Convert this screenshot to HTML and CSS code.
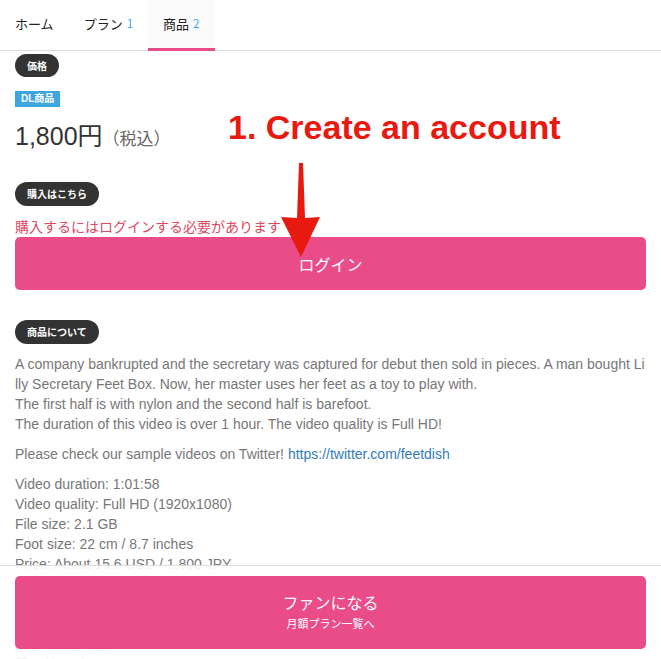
FILE: index.html
```
<!DOCTYPE html>
<html lang="ja">

<head>
    <meta charset="UTF-8">
    <meta name="viewport" content="width=device-width, initial-scale=1.0">
    <title>商品</title>

    <link rel="stylesheet" href="styles.css">
</head>

<body>
    <!-- Tabs -->
    <nav class="tabs">
        <a class="tab" href="#">ホーム</a>
        <a class="tab" href="#">プラン <span class="count">1</span></a>
        <a class="tab active" href="#">商品 <span class="count">2</span></a>
    </nav>

    <main class="content">
        <span class="badge badge-first">価格</span>

        <div class="dl-label">DL商品</div>
        <div class="price">1,800円<span class="tax">（税込）</span></div>

        <span class="badge">購入はこちら</span>
        <p class="notice">購入するにはログインする必要があります</p>
        <button class="pink-btn login-btn">ログイン</button>

        <span class="badge">商品について</span>
        <div class="desc">
            <p>A company bankrupted and the secretary was captured for debut then sold in pieces. A man bought Lilly Secretary Feet Box. Now, her master uses her feet as a toy to play with.<br>
            The first half is with nylon and the second half is barefoot.<br>
            The duration of this video is over 1 hour. The video quality is Full HD!</p>
            <p>Please check our sample videos on Twitter! <a href="#">https://twitter.com/feetdish</a></p>
            <p>Video duration: 1:01:58<br>
            Video quality: Full HD (1920x1080)<br>
            File size: 2.1 GB<br>
            Foot size: 22 cm / 8.7 inches<br>
            Price: About 15.6 USD / 1,800 JPY<br>
            Model: Lilly<br>
            動画時間：1時間1分58秒<br>
            画質：フルHD（1920x1080）<br>
            ファイルサイズ：2.1GB<br>
            足のサイズ：22cm<br>
            価格：1,800円</p>
        </div>
    </main>

    <!-- Annotation -->
    <div class="note">1. Create an account</div>
    <svg class="arrow" width="40" height="95" viewBox="0 0 40 95">
        <polygon points="18,0 22,0 24,55 39,54 20,94 0,54 16,55" fill="#e8190f" />
    </svg>

    <!-- Fixed footer -->
    <footer class="footer">
        <button class="pink-btn fan-btn">
            <span class="fan-main">ファンになる</span>
            <span class="fan-sub">月額プラン一覧へ</span>
        </button>
    </footer>
</body>

</html>
```

FILE: styles.css
```
body {
    margin: 0;
    font-family: "Liberation Sans", "Noto Sans CJK JP", sans-serif;
    color: #333;
    background-color: white;
}

.tabs {
    display: flex;
    height: 50px;
    border-bottom: 1px solid #dcdcdc;
}

.tab {
    display: flex;
    align-items: center;
    padding: 0 15px 2px;
    font-family: "Noto Sans CJK JP", sans-serif;
    font-size: 13px;
    color: #222;
    text-decoration: none;
    border-bottom: 3px solid transparent;
    margin-bottom: -1px;
}

.tab .count {
    font-size: 11.5px;
    color: #3ea8e5;
    margin-left: 4px;
}

.tab.active {
    padding-right: 16px;
    background-color: #fafafa;
    border-bottom-color: #e94c89;
}

.content {
    padding: 0 15px 120px;
}

.badge {
    display: inline-block;
    height: 24px;
    line-height: 24px;
    padding: 0 12px;
    border-radius: 12px;
    background-color: #333;
    color: white;
    font-family: "Noto Sans CJK JP", sans-serif;
    font-size: 10px;
    font-weight: bold;
}

.badge-first {
    margin-top: 3px;
    height: 23px;
    line-height: 23px;
}

.dl-label {
    display: block;
    width: fit-content;
    margin-top: 14px;
    padding: 0 6px;
    height: 16px;
    line-height: 16px;
    background-color: #3da5e0;
    color: white;
    font-size: 10px;
    font-weight: bold;
}

.price {
    margin: 11px 0 28px;
    height: 36px;
    line-height: 36px;
    font-size: 25px;
    color: #333;
}

.tax {
    font-family: "Noto Sans CJK JP", sans-serif;
    font-size: 17px;
    color: #666;
}

.notice {
    margin: 10px 0 0;
    height: 21px;
    line-height: 21px;
    font-family: "Noto Sans CJK JP", sans-serif;
    font-size: 14px;
    color: #dc4a63;
}

.pink-btn {
    display: block;
    width: 100%;
    border: none;
    border-radius: 5px;
    background-color: #e94c89;
    color: white;
    font-family: "Noto Sans CJK JP", sans-serif;
    cursor: pointer;
}

.login-btn {
    height: 53px;
    margin-bottom: 30px;
    font-size: 16px;
}

.desc {
    margin-top: 10px;
    font-size: 14px;
    line-height: 20px;
    color: #777;
    word-break: break-all;
}

.desc p {
    margin: 0 0 10px;
}

.desc a {
    color: #337ab7;
    text-decoration: none;
}

.note {
    position: absolute;
    left: 228px;
    top: 108px;
    font-size: 34px;
    font-weight: bold;
    color: #e8190f;
}

.arrow {
    position: absolute;
    left: 281px;
    top: 163px;
}

.footer {
    position: fixed;
    left: 0;
    right: 0;
    bottom: 0;
    padding: 10px 15px;
    border-top: 1px solid #dcdcdc;
    background-color: rgba(255, 255, 255, 0.9);
}

.fan-btn {
    height: 73px;
    padding-bottom: 5px;
}

.fan-main {
    display: block;
    font-size: 16px;
    line-height: 24px;
}

.fan-sub {
    display: block;
    margin-top: 1px;
    font-size: 11px;
    line-height: 16px;
}
```
